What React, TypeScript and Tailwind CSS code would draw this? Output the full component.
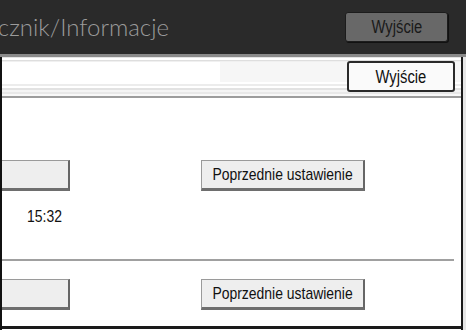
import React from "react";

const F = { fontFamily: '"Liberation Sans", Arial, sans-serif' };

function T({ children, className = "" }: { children: React.ReactNode; className?: string }) {
  return <span className={"inline-block whitespace-nowrap scale-x-[0.82] " + className}>{children}</span>;
}

function GrayButton({ children, className = "" }: { children?: React.ReactNode; className?: string }) {
  return (
    <div
      className={
        "h-[31px] flex items-center justify-center bg-[#eeeeee] border-t border-l border-[#9a9a9a] border-r-2 border-r-[#666] border-b-[3px] border-b-[#6e6e6e] text-[17px] text-[#111] leading-none whitespace-nowrap " +
        className
      }
    >
      {children}
    </div>
  );
}

export default function App() {
  return (
    <div className="w-[466px] h-[330px] bg-white overflow-hidden flex flex-col" style={F}>
      {/* header */}
      <div className="h-[54px] bg-[#2a2a2a] flex items-center shrink-0">
        <div className="w-[169px] overflow-hidden flex justify-end shrink-0">
          <span
            className="whitespace-nowrap text-[24px] leading-none text-[#9b9b9b] font-light pb-[1px]"
            style={{ fontFamily: 'Lato, "Liberation Sans", sans-serif' }}
          >
            Podręcznik/Informacje
          </span>
        </div>
        <div className="ml-auto mr-[18px] w-[103px] h-[30px] bg-[#686868] rounded-[3px] border border-[#1c1c1c] shadow-[1px_1px_0_#111] flex items-center justify-center text-[18px] text-[#1a1a1a] leading-none">
          <T>Wyjście</T>
        </div>
      </div>
      <div className="h-[3px] bg-[#8a8a8a] shrink-0" />
      {/* body */}
      <div className="flex flex-1 min-h-0">
        <div className="w-[2px] bg-[#111] shrink-0" />
        <div className="flex-1 flex flex-col overflow-hidden">
          {/* toolbar */}
          <div className="h-[41px] relative flex shrink-0 border-b-2 border-b-[#9c9c9c]">
            <div className="flex-1 flex flex-col">
              <div className="h-[1px] bg-[#e4e4e4]" />
              <div className="h-[2px] bg-white" />
              <div className="h-[1px] bg-[#dedede]" />
              <div className="h-[1px] bg-[#f0f0f0]" />
              <div className="h-[20px] flex">
                <div className="w-[218px] bg-white" />
                <div className="flex-1 bg-[#f6f6f6]" />
              </div>
              <div className="h-[2px] bg-white" />
              <div className="h-[2px] bg-[#ececec]" />
              <div className="h-[2px] bg-white" />
              <div className="h-[2px] bg-[#e2e2e2]" />
              <div className="h-[2px] bg-[#f4f4f4]" />
              <div className="h-[2px] bg-[#e8e8e8]" />
              <div className="flex-1 bg-[#f8f8f8]" />
            </div>
            <div className="absolute right-[6px] top-[4px] w-[108px] h-[31px] bg-[#fafafa] rounded-[3px] border-2 border-[#2a2a2a] flex items-center justify-center text-[18px] text-[#111] leading-none">
              <T>Wyjście</T>
            </div>
          </div>
          {/* section 1 */}
          <div className="h-[163px] flex flex-col shrink-0 border-b-2 border-b-[#a0a0a0] mr-[7px]">
            <div className="flex mt-[62px]">
              <GrayButton className="w-[110px] ml-[-42px]" />
              <GrayButton className="w-[164px] ml-[131px]">
                <T>Poprzednie ustawienie</T>
              </GrayButton>
            </div>
            <div className="ml-[25px] mt-[17px] text-[17px] leading-none text-[#111] flex">
              <T className="origin-left">15:32</T>
            </div>
          </div>
          {/* section 2 */}
          <div className="flex flex-col flex-1">
            <div className="flex mt-[18px]">
              <GrayButton className="w-[110px] ml-[-42px]" />
              <GrayButton className="w-[164px] ml-[131px]">
                <T>Poprzednie ustawienie</T>
              </GrayButton>
            </div>
          </div>
          <div className="h-[3px] bg-[#1a1a1a] shrink-0 mb-[1px]" />
        </div>
        <div className="w-[2px] bg-[#1a1a1a] shrink-0" />
        <div className="w-[3px] bg-[#e6e6e6] shrink-0" />
      </div>
    </div>
  );
}
